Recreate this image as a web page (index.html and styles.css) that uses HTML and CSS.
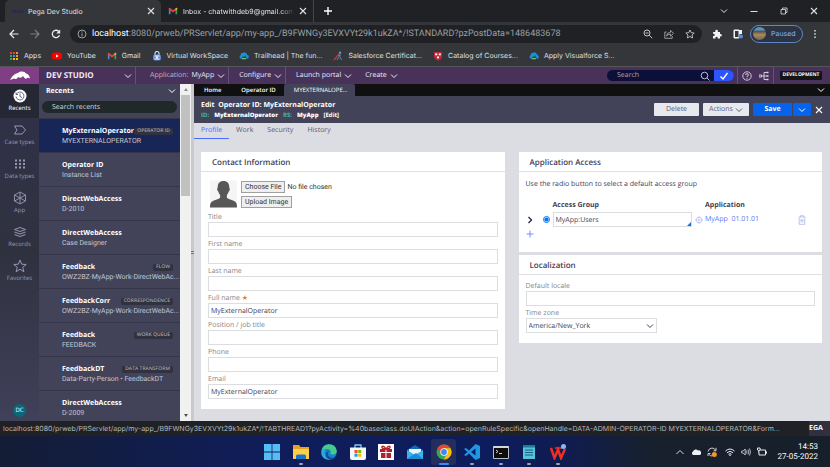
FILE: index.html
```
<!DOCTYPE html>
<html lang="en">
<head>
<meta charset="UTF-8">
<meta name="viewport" content="width=device-width, initial-scale=1.0">
<title>Pega Dev Studio</title>
<link rel="stylesheet" href="styles.css">
</head>
<body>

  <!-- shared icons -->
  <svg class="sprite" aria-hidden="true">
    <symbol id="chevron" viewBox="0 0 8 8"><path d="M1 2.500l3 3 3-3" fill="none" stroke="currentColor" stroke-width="1"/></symbol>
    <symbol id="close" viewBox="0 0 8 8"><path d="M1 1l6 6M7 1L1 7" fill="none" stroke="currentColor" stroke-width="1.1"/></symbol>
    <symbol id="gmail" viewBox="0 0 12 10"><path d="M1 9V2l2 1.5V9z" fill="#4285f4"/><path d="M9 9V3.500L11 2v7z" fill="#34a853"/><path d="M1 3V1.500L2.200 1 6 4 9.800 1l1.200.5V3L6 6.700z" fill="#ea4335"/><path d="M9 2l1.200-1L11 1.500V3L9 4.500z" fill="#fbbc04"/></symbol>
    <symbol id="salesforce" viewBox="0 0 12 12"><path d="M2.500 9.500a2.300 2.300 0 0 1-.6-4.300A3 3 0 0 1 5 2a3.300 3.300 0 0 1 4.800 2.600 2.500 2.500 0 0 1 0 4.900z" fill="#1b8fd8"/><path d="M3 9.500l2-3.500 1 1.500L7.500 5l2 4.500z" fill="#114a38"/><path d="M3.500 10h5L8 8.500H4z" fill="#79c86a"/></symbol>
  </svg>

  <header class="browser">
    <div class="tabs">
      <div class="tab tab-active">
        <span class="favicon">PEGA</span>
        <span class="tab-title">Pega Dev Studio</span>
        <svg class="icon-xs"><use href="#close"/></svg>
      </div>
      <div class="tab">
        <svg class="icon-sm"><use href="#gmail"/></svg>
        <span class="tab-title fade">Inbox - chatwithdeb9@gmail.com</span>
        <svg class="icon-xs"><use href="#close"/></svg>
      </div>
      <svg class="icon-sm new-tab" viewBox="0 0 10 10"><path d="M5 1v8M1 5h8" stroke="#fff" stroke-width="1.4"/></svg>
      <div class="window-buttons">
        <svg class="icon-xs"><use href="#chevron"/></svg>
        <svg class="icon-xs" viewBox="0 0 8 8"><path d="M.5 4.500h7" stroke="currentColor"/></svg>
        <svg class="icon-xs" viewBox="0 0 8 8"><path d="M1 2.500h4.500V7H1zM2.500 2.500V1H7v4.500H5.500" fill="none" stroke="currentColor" stroke-width=".8"/></svg>
        <svg class="icon-xs"><use href="#close"/></svg>
      </div>
    </div>

    <div class="toolbar">
      <svg class="icon-sm" viewBox="0 0 10 10"><path d="M9.500 5H1M5 1L1 5l4 4" fill="none" stroke="#e8eaed" stroke-width="1.2"/></svg>
      <svg class="icon-sm" viewBox="0 0 10 10"><path d="M.5 5H9M5 1l4 4-4 4" fill="none" stroke="#7d7f83" stroke-width="1.100"/></svg>
      <svg class="icon-sm" viewBox="0 0 10 10"><path d="M8.500 6.200A3.700 3.700 0 1 1 7.800 2.500" fill="none" stroke="#e8eaed" stroke-width="1.300"/><path d="M9.200.5v4h-4z" fill="#e8eaed"/></svg>
      <div class="address">
        <svg class="icon-sm" viewBox="0 0 10 10"><circle cx="5" cy="5" r="4" fill="none" stroke="#9aa0a6"/><path d="M5 4.300V7.500M5 2.400v1.100" stroke="#9aa0a6"/></svg>
        <span class="url"><b>localhost</b>:8080/prweb/PRServlet/app/my-app_/B9FWNGy3EVXVYt29k1ukZA*/!STANDARD?pzPostData=1486483678</span>
        <svg class="icon-sm" viewBox="0 0 10 10"><circle cx="4" cy="4" r="3" fill="none" stroke="#c4c7cb"/><path d="M6.200 6.200l3 3M2.500 4h3" stroke="#c4c7cb"/></svg>
        <svg class="icon-sm" viewBox="0 0 10 10"><path d="M2.500 3H.8v6.300h7.400V7M2.500 7q.3-3.500 4-3.700V1.300l3 3-3 2.900V5.200Q4 5 2.500 7z" fill="none" stroke="#b4b7bb" stroke-width=".8"/></svg>
        <svg class="icon-sm" viewBox="0 0 10 10"><path d="M5 1l1.200 2.700 3 .3-2.200 2 .6 3L5 7.500 2.400 9 3 6 .8 4l3-.3z" fill="none" stroke="#c4c7cb" stroke-width=".9"/></svg>
      </div>
      <svg class="icon-sm" viewBox="0 0 10 10"><path d="M1 3h2.300V2a1.300 1.300 0 0 1 2.600 0v1H8v2h.6a1.200 1.200 0 0 1 0 2.400H8V9.500H5.700V9a1.100 1.100 0 0 0-2.300 0v.5H1V7h.6a1.100 1.100 0 0 0 0-2.200H1z" fill="#f1f3f4"/></svg>
      <svg class="icon-sm side-panel" viewBox="0 0 10 10"><path d="M1 1h8v4H6V2H2v6h3v1H1z" fill="#f1f3f4"/><path d="M1 1h5v8H1z" fill="none" stroke="#f1f3f4"/><circle cx="8" cy="7.500" r="2" fill="#4d8df5"/></svg>
      <button class="profile"><span class="avatar"></span>Paused</button>
      <svg class="icon-sm" viewBox="0 0 10 10"><path d="M4.300 1h1.400v1.400H4.300zM4.300 4.300h1.400v1.400H4.300zM4.300 7.600h1.400V9H4.300z" fill="#e8eaed"/></svg>
    </div>

    <nav class="bookmarks">
      <a href="#"><svg class="icon-sm" viewBox="0 0 10 10"><path d="M1 1h2v2H1zM4 1h2v2H4z" fill="#ea4335"/><path d="M7 1h2v2H7zM7 4h2v2H7z" fill="#fb8c3c"/><path d="M1 4h2v2H1zM1 7h2v2H1z" fill="#34a853"/><path d="M4 4h2v2H4z" fill="#4285f4"/><path d="M4 7h2v2H4zM7 7h2v2H7z" fill="#fbbc04"/></svg>Apps</a>
      <a href="#"><svg class="icon-sm" viewBox="0 0 10 10"><rect y="1.500" width="10" height="7" rx="2" fill="#f00"/><path d="M4 3.500L6.700 5 4 6.500z" fill="#fff"/></svg>YouTube</a>
      <a href="#"><svg class="icon-sm"><use href="#gmail"/></svg>Gmail</a>
      <a href="#"><svg class="icon-sm" viewBox="0 0 10 10"><path d="M3 4V2.500a2 2 0 0 1 4 0V4" fill="none" stroke="#c9d8f5" stroke-width="1.200"/><rect x="1" y="3.500" width="8" height="6" rx="2" fill="#5d8ae0"/><path d="M2.500 5h5M2.500 8h5" stroke="#fff"/><circle cx="5" cy="6.500" r="1" fill="#fff"/></svg>Virtual WorkSpace</a>
      <a href="#"><svg class="icon-sm"><use href="#salesforce"/></svg>Trailhead | The fun...</a>
      <a href="#"><svg class="icon-sm" viewBox="0 0 10 10"><path d="M1 9l5-6" stroke="#c93434" stroke-width="1.400"/><path d="M4 9l2-3M6 3.500L7 6l1.500 3M5 5l3-1" fill="none" stroke="#4b8bbd"/><circle cx="7" cy="1.700" r="1.200" fill="#5f9bc8"/></svg>Salesforce Certificat...</a>
      <a href="#"><svg class="icon-sm" viewBox="0 0 10 10"><path d="M1 1h8v4Q9 8 5 9.700 1 8 1 5z" fill="#c6283b"/><path d="M2.200 2.500h2v1.700h-2zM5.800 2.500h2v1.700h-2zM4 5.500h2v1.700H4z" fill="#fff"/></svg>Catalog of Courses...</a>
      <a href="#"><svg class="icon-sm"><use href="#salesforce"/></svg>Apply Visualforce S...</a>
    </nav>
  </header>

  <header class="studio-bar">
    <div class="logo">
      <svg viewBox="0 0 20 10"><path d="M0 9Q3 3 8 2q1-2 4-1.500 3 .2 4 2 3 .5 4 5-2.500-1.500-4 .5-2-1-3-3Q11 8 8 6 7 9 4 7.500 2 8 0 9z" fill="#fff"/></svg>
    </div>
    <button class="studio-name">DEV STUDIO <svg class="icon-xs"><use href="#chevron"/></svg></button>
    <button class="menu menu-app menu-line"><span>Application:</span> MyApp <svg class="icon-xs"><use href="#chevron"/></svg></button>
    <button class="menu menu-line">Configure <svg class="icon-xs"><use href="#chevron"/></svg></button>
    <button class="menu">Launch portal <svg class="icon-xs"><use href="#chevron"/></svg></button>
    <button class="menu">Create <svg class="icon-xs"><use href="#chevron"/></svg></button>
    <div class="search">
      <input type="text" placeholder="Search" aria-label="Search">
      <svg class="icon-sm" viewBox="0 0 10 10"><circle cx="4.500" cy="4.500" r="3.300" fill="none" stroke="#b9bccb"/><path d="M7 7l2.500 2.500" stroke="#b9bccb"/></svg>
      <button class="search-go" aria-label="Go"><svg class="icon-sm" viewBox="0 0 10 10"><path d="M1.500 5.500L4 8l4.500-6" fill="none" stroke="#fff" stroke-width="1.400"/></svg></button>
    </div>
    <div class="studio-tools">
      <svg class="icon-sm" viewBox="0 0 10 10"><circle cx="5" cy="5" r="4.200" fill="none" stroke="#ddd6e4" stroke-width=".9"/><path d="M3.600 4q0-1.400 1.400-1.400T6.400 4Q6.400 5 5 5.300V6M5 6.800v1" fill="none" stroke="#ddd6e4" stroke-width=".9"/></svg>
      <svg class="icon-sm" viewBox="0 0 10 10"><path d="M0 4h2.500v2H0zM2.500 5H5M8 1.500H5v7h3M5 5h3" fill="none" stroke="#ddd6e4" stroke-width=".9"/><path d="M7.500.7H9.500v1.600h-2zM7.500 4.200H9.500v1.600h-2zM7.500 7.700H9.500v1.600h-2z" fill="#ddd6e4"/></svg>
    </div>
    <span class="env">DEVELOPMENT</span>
  </header>

  <div class="workspace">
    <nav class="rail">
      <a href="#" class="active"><svg viewBox="0 0 14 14"><circle cx="7" cy="7" r="6.500" fill="#fff"/><path d="M3.500 5A4 4 0 1 1 3 7.500M3 3.500V5.500h2M7 4.500V7.500l2 1" fill="none" stroke="#55566a" stroke-width=".9"/></svg>Recents</a>
      <a href="#"><svg viewBox="0 0 14 14"><path d="M1.500 3H9l3.500 4L9 11H1.500L4 7z" fill="none" stroke="currentColor"/></svg>Case types</a>
      <a href="#"><svg viewBox="0 0 14 14"><path d="M2 3.500h10M2 7h10M2 10.500h10" stroke="currentColor" stroke-width="2" stroke-dasharray="2"/></svg>Data types</a>
      <a href="#"><svg viewBox="0 0 14 14"><path d="M7 1l5.500 3v6L7 13l-5.500-3V4zM1.500 4L7 7l5.500-3M7 1v12M1.500 10L7 7l5.500 3" fill="none" stroke="currentColor" stroke-width=".9"/></svg>App</a>
      <a href="#"><svg viewBox="0 0 14 14"><path d="M1.500 4.500L7 2.500l5.500 2L7 6.500zM1.500 7L7 9l5.500-2M1.500 9.500L7 11.500l5.500-2" fill="none" stroke="currentColor"/></svg>Records</a>
      <a href="#"><svg viewBox="0 0 14 14"><path d="M7 1l1.700 4.200 4.500.3-3.500 2.800 1.200 4.400L7 10.300l-3.900 2.400 1.200-4.400L.8 5.500l4.500-.3z" fill="none" stroke="currentColor"/></svg>Favorites</a>
      <span class="user">DC</span>
    </nav>

    <aside class="recents">
      <div class="recents-head">
        <div class="recents-title">Recents <svg class="icon-xs"><use href="#chevron"/></svg></div>
        <input type="text" placeholder="Search recents" aria-label="Search recents">
      </div>
      <ul>
        <li class="selected"><div><b>MyExternalOperator</b><em>OPERATOR ID</em></div><p>MYEXTERNALOPERATOR</p></li>
        <li><div><b>Operator ID</b></div><p>Instance List</p></li>
        <li><div><b>DirectWebAccess</b></div><p>D-2010</p></li>
        <li><div><b>DirectWebAccess</b></div><p>Case Designer</p></li>
        <li><div><b>Feedback</b><em>FLOW</em></div><p>OWZ2BZ-MyApp-Work-DirectWebAc...</p></li>
        <li><div><b>FeedbackCorr</b><em>CORRESPONDENCE</em></div><p>OWZ2BZ-MyApp-Work-DirectWebAc...</p></li>
        <li><div><b>Feedback</b><em>WORK QUEUE</em></div><p>FEEDBACK</p></li>
        <li><div><b>FeedbackDT</b><em>DATA TRANSFORM</em></div><p>Data-Party-Person • FeedbackDT</p></li>
        <li><div><b>DirectWebAccess</b></div><p>D-2009</p></li>
      </ul>
    </aside>
    <div class="scrollbar"><i class="up"></i><i class="thumb"></i><i class="down"></i></div>
    <div class="splitter"><i></i></div>

    <main>
      <div class="doc-tabs">
        <a href="#">Home</a>
        <a href="#">Operator ID</a>
        <a href="#" class="active">MYEXTERNALOPE...</a>
        <svg class="icon-xs"><use href="#chevron"/></svg>
      </div>

      <div class="rule-head">
        <div class="rule-name">
          <h1>Edit&nbsp; Operator ID: MyExternalOperator</h1>
          <p><span>ID:</span> <b>MyExternalOperator</b> <span>RS:</span> <b>MyApp</b> <a href="#">[Edit]</a></p>
        </div>
        <button class="btn">Delete</button>
        <button class="btn btn-actions">Actions <svg class="icon-xs"><use href="#chevron"/></svg></button>
        <div class="save-group">
          <button class="save">Save</button>
          <button class="save-more" aria-label="More save options"><svg class="icon-xs"><use href="#chevron"/></svg></button>
        </div>
        <svg class="icon-xs rule-close"><use href="#close"/></svg>
      </div>

      <nav class="section-tabs">
        <a href="#" class="active">Profile</a>
        <a href="#">Work</a>
        <a href="#">Security</a>
        <a href="#">History</a>
      </nav>

      <div class="columns">
        <section class="card">
          <h2>Contact Information</h2>
          <div class="card-body">
            <div class="photo">
              <svg viewBox="0 0 28 28"><path d="M0 0h28v28H0z" fill="#f5f5f5"/><path d="M14 .5c4 0 6 2.500 6 6.500 0 1 .7 1 .5 2.500-.2 1.300-1 1.500-1.200 2.200-.5 1.800-1.300 2.800-1.800 3.300v3c1.500 1.500 5 2 8 3.500 2 1 2.500 3 2.500 6.500H0c0-3.500.5-5.500 2.500-6.500 3-1.500 6.500-2 8-3.500v-3c-.5-.5-1.300-1.500-1.800-3.300-.2-.7-1-.9-1.200-2.200C7.300 8 8 8 8 7c0-4 2-6.500 6-6.500z" fill="#575757"/></svg>
              <div>
                <input type="file" aria-label="Image file">
                <button class="upload">Upload Image</button>
              </div>
            </div>
            <label for="title">Title</label>
            <input type="text" id="title">
            <label for="first">First name</label>
            <input type="text" id="first">
            <label for="last">Last name</label>
            <input type="text" id="last">
            <label for="full">Full name <span class="required">★</span></label>
            <input type="text" id="full" value="MyExternalOperator">
            <label for="position">Position / job title</label>
            <input type="text" id="position">
            <label for="phone">Phone</label>
            <input type="text" id="phone">
            <label for="email">Email</label>
            <input type="text" id="email" value="MyExternalOperator">
          </div>
        </section>

        <div class="stack">
          <section class="card">
            <h2>Application Access</h2>
            <div class="card-body access">
              <p>Use the radio button to select a default access group</p>
              <table>
                <thead>
                  <tr><th class="col-open"></th><th class="col-radio"></th><th>Access Group</th><th class="col-target"></th><th class="col-app">Application</th><th class="col-trash"></th></tr>
                </thead>
                <tbody>
                  <tr>
                    <td><svg class="icon-xs open" viewBox="0 0 8 8"><path d="M2.500 1l3 3-3 3" fill="none" stroke="#23233c" stroke-width="1.300"/></svg></td>
                    <td><input type="radio" name="access" aria-label="Default access group" checked></td>
                    <td class="group"><input type="text" value="MyApp:Users" aria-label="Access Group"></td>
                    <td><svg class="icon-xs" viewBox="0 0 8 8"><circle cx="4" cy="4" r="2.800" fill="none" stroke="#aab4f5" stroke-width=".7"/><circle cx="4" cy="4" r="1" fill="none" stroke="#aab4f5" stroke-width=".7"/><path d="M4 0v1.500M4 6.500V8M0 4h1.500M6.500 4H8" stroke="#aab4f5" stroke-width=".7"/></svg></td>
                    <td><a href="#">MyApp&nbsp; 01.01.01</a></td>
                    <td><svg class="icon-xs trash" viewBox="0 0 8 10"><path d="M.5 2h7M2.500 2V.7h3V2M1.200 2.500v6.800h5.600V2.500M3 4v3.500M5 4v3.500M3 5.700h2" fill="none" stroke="#aab4f5" stroke-width=".8"/></svg></td>
                  </tr>
                </tbody>
              </table>
              <button class="add" aria-label="Add access group"><svg class="icon-xs" viewBox="0 0 8 8"><path d="M4 .5v7M.5 4h7" stroke="#6d82fb" stroke-width=".9"/></svg></button>
            </div>
          </section>

          <section class="card">
            <h2>Localization</h2>
            <div class="card-body locale">
              <label for="locale">Default locale</label>
              <input type="text" id="locale">
              <label for="zone">Time zone</label>
              <div class="select-wrap">
                <select id="zone"><option>America/New_York</option></select>
                <svg class="icon-xs"><use href="#chevron"/></svg>
              </div>
            </div>
          </section>
        </div>
      </div>
    </main>
  </div>

  <footer class="footer">
    <div class="status">localhost:8080/prweb/PRServlet/app/my-app_/B9FWNGy3EVXVYt29k1ukZA*/!TABTHREAD1?pyActivity=%40baseclass.doUIAction&amp;action=openRuleSpecific&amp;openHandle=DATA-ADMIN-OPERATOR-ID MYEXTERNALOPERATOR&amp;Form...</div>
    <span class="brand">EGA</span>
  </footer>

  <div class="taskbar">
    <div class="apps">
      <span><svg viewBox="0 0 16 16"><path d="M0 0h7.600v7.600H0zM8.400 0H16v7.600H8.400zM0 8.400h7.600V16H0zM8.400 8.400H16V16H8.400z" fill="#55bdf5"/></svg></span>
      <span class="running"><svg viewBox="0 0 16 16"><path d="M0 1h6l1.500 2H16v12H0z" fill="#e6a21c"/><path d="M0 5h16v10H0z" fill="#fccf4b"/><path d="M3 15v-3q0-1.500 1.500-1.500h7Q13 10.500 13 12v3z" fill="#1674c9"/></svg></span>
      <span><svg viewBox="0 0 16 16"><circle cx="8" cy="8" r="7.800" fill="#1683d0"/><path d="M.5 7Q1.500.3 8 .2q7 .3 7.800 6.800-.3 4-5 3.500-2-.5-1-2.500Q9.500 5 6 5 2 5 .5 7z" fill="#46c98a"/><path d="M.5 7Q2 5 5 5.500q-2 2-1 5 1.500 4 5.500 5Q3 16.500.5 11z" fill="#2ba8dc"/><path d="M8 7q-3 4 1.500 6.500 3 1 5.500-1-2 3-5.500 3.200Q4 14.500 4.800 9.500 6 7 8 7z" fill="#0c4f97"/></svg></span>
      <span><svg viewBox="0 0 16 16"><path d="M5 4V1h6v3" fill="none" stroke="#7cc7f7" stroke-width="1.300"/><path d="M0 3.500h16V14q0 2-2 2H2q-2 0-2-2z" fill="#f3f6fa"/><path d="M4.500 6h3v3h-3z" fill="#f25022"/><path d="M8.200 6h3v3h-3z" fill="#7fba00"/><path d="M4.500 9.700h3v3h-3z" fill="#00a4ef"/><path d="M8.200 9.700h3v3h-3z" fill="#ffb900"/></svg></span>
      <span><svg viewBox="0 0 16 16"><path d="M0 0h16v16H0z" fill="#fff"/><path d="M2 5h5.500v3H2zM8.500 5H14v3H8.500zM3 9h4.500v5H3zM8.500 9H13v5H8.500z" fill="#b5202f"/><path d="M7.500 5Q3 4.500 4 2.500 6 1.500 8 5q2-3.500 4-2.500 1 2-3.500 2.500" fill="none" stroke="#b5202f" stroke-width="1.300"/></svg></span>
      <span><svg viewBox="0 0 16 16"><path d="M0 6l8-5 8 5v9H0z" fill="#1267b4"/><path d="M2 5h12v6H2z" fill="#e9f5fd"/><path d="M0 6l8 5 8-5v9H0z" fill="#3bb1ee"/><path d="M0 15l9-6 7 6z" fill="#1d8ad6"/></svg></span>
      <span class="current"><svg viewBox="0 0 16 16"><circle cx="8" cy="8" r="7.500" fill="#34a853"/><path d="M1.500 4.200A7.500 7.500 0 0 1 14.500 4.200H8L5 9.800z" fill="#ea4335"/><path d="M14.500 4.200A7.500 7.500 0 0 1 7.700 15.500L11 9.800 8 4.200z" fill="#fbbc04"/><circle cx="8" cy="8" r="3.700" fill="#fff"/><circle cx="8" cy="8" r="2.900" fill="#4285f4"/></svg></span>
      <span class="running"><svg viewBox="0 0 16 16"><path d="M11.500 0L16 2v12l-4.500 2L5 9.500 2 12 0 11l3.500-3L0 5l2-1 3 2.500zM11.500 4.500L7 8l4.500 3.500z" fill="#2196e3" fill-rule="evenodd"/></svg></span>
      <span class="running"><svg viewBox="0 0 16 16"><path d="M.5 2.500h15v12H.5z" fill="#0c0c0c" stroke="#b9bcc2"/><path d="M.5 2h15v2H.5z" fill="#d4d6da"/><path d="M3 6l2 1.500L3 9M6 9.500h3" fill="none" stroke="#fff" stroke-width=".8"/></svg></span>
      <span class="running"><svg viewBox="0 0 16 16"><path d="M2 1h12v14H2z" fill="#54c4dc"/><path d="M2 1h12v2.500H2z" fill="#1a7c95"/><path d="M4 6h8M4 8.500h8M4 11h8" stroke="#15637b"/></svg></span>
      <span class="running"><svg viewBox="0 0 16 16"><path d="M1 4l3.500 10L8 5.500 11 14l4-9" fill="none" stroke="#ee3024" stroke-width="2.500"/><path d="M5 4h7" stroke="#ee3024" stroke-width="1.500"/><circle cx="13.500" cy="2.500" r="2.500" fill="#8fb4f7"/></svg></span>
    </div>
    <div class="tray">
      <svg class="icon-sm" viewBox="0 0 10 10"><path d="M1.500 7L5 3.500 8.500 7" fill="none" stroke="#d9dde3"/></svg>
      <svg class="icon-sm" viewBox="0 0 10 10"><path d="M2 8a2 2 0 0 1 0-3.500 3 3 0 0 1 5-1 2.300 2.300 0 0 1 1.500 4.500z" fill="#eef1f4"/></svg>
      <svg class="icon-sm" viewBox="0 0 10 10"><path d="M1 4.500Q2 1 5 1q2.500 0 3.700 2.500M9 .8v3H6.500M1 9V6.500h2.500M2 7.500Q3.500 9 5 9" fill="none" stroke="#d9dde3" stroke-width=".9"/><circle cx="7.300" cy="7.500" r="2.500" fill="#f7981d"/></svg>
      <svg class="icon-sm wifi" viewBox="0 0 10 10"><path d="M.5 4q4.500-4 9 0M2 5.700q3-2.700 6 0M3.500 7.300q1.500-1.300 3 0" fill="none" stroke="#e9ecef"/><circle cx="5" cy="8.300" r=".8" fill="#e9ecef"/></svg>
      <svg class="icon-sm" viewBox="0 0 10 10"><path d="M.7 4h1.500l2-2v6l-2-2H.7zM5.500 3.500q1 1.500 0 3M7 2.500q1.700 2.500 0 5M8.500 1.500q2 3.500 0 7" fill="none" stroke="#d9dde3" stroke-width=".8"/></svg>
      <svg class="icon-sm" viewBox="0 0 10 10"><path d="M3 3h5.500v5H2V5.500M9.500 4.500v2M.5 1v2q1.300 1.500 2.600 0V1zM1.800 3.500V6" fill="none" stroke="#e9ecef"/></svg>
    </div>
    <div class="clock">14:53<br>27-05-2022</div>
  </div>

</body>
</html>
```
FILE: styles.css
```
* {
  box-sizing: border-box;
}

body {
  margin: 0;
  height: 100vh;
  display: flex;
  flex-direction: column;
  font-family: "Open Sans", "Noto Sans", sans-serif;
  font-size: 7px;
  text-rendering: geometricPrecision;
  background-color: #dcdde3;
  color: #3f4058;
}

a {
  color: inherit;
  text-decoration: none;
}

button,
input,
select {
  font-family: inherit;
  font-size: inherit;
  color: inherit;
  margin: 0;
  text-rendering: inherit;
}

button {
  border: none;
  background: none;
  padding: 0;
  cursor: pointer;
}

h1, h2, p, ul {
  margin: 0;
  padding: 0;
}

svg {
  flex: none;
}

.sprite {
  display: none;
}

.icon-xs {
  width: 8px;
  height: 8px;
}

.icon-sm {
  width: 10px;
  height: 10px;
}

/* browser window */
.browser,
.status {
  font-family: Inter, Roboto, sans-serif;
  font-size: 7px;
}

.browser {
  background-color: #35363a;
  color: #dfe1e5;
  border-bottom: 1px solid #55565a;
}

.tabs {
  height: 22px;
  display: flex;
  align-items: center;
  background-color: #202124;
  padding-left: 5px;
}

.tab {
  width: 153px;
  height: 22px;
  display: flex;
  align-items: center;
  gap: 5px;
  padding: 0 6px 0 7px;
  border-right: 1px solid #45464a;
}

.tab-active {
  width: 156px;
  background-color: #35363a;
  border-right: none;
  border-radius: 5px 5px 0 0;
}

.favicon {
  width: 11px;
  font-size: 4px;
  font-weight: bold;
  color: #23245a;
}

.tab-title {
  flex: 1;
  overflow: hidden;
  white-space: nowrap;
}

.fade {
  mask-image: linear-gradient(to right, #000 88%, transparent);
}

.new-tab {
  margin-left: 9px;
}

.window-buttons {
  margin-left: auto;
  display: flex;
  gap: 22px;
  padding-right: 12px;
}

.toolbar {
  height: 23px;
  display: flex;
  align-items: center;
  gap: 11px;
  padding: 0 10px 0 9px;
}

.address {
  flex: 1;
  min-width: 0;
  height: 18px;
  display: flex;
  align-items: center;
  gap: 11px;
  padding: 0 7px;
  border-radius: 9px;
  background-color: #202124;
  margin-left: -2px;
  margin-right: -1px;
}

.url {
  flex: 1;
  margin-left: -6px;
  overflow: hidden;
  white-space: nowrap;
  font-family: Roboto, sans-serif;
  font-size: 9px;
  color: #9aa0a6;
}

.url b {
  font-weight: normal;
  color: #fff;
}

.side-panel {
  margin-right: -4px;
}

.profile {
  width: 53px;
  height: 18px;
  display: flex;
  align-items: center;
  gap: 5px;
  padding: 0 2px;
  border: 1px solid #5f86c4;
  border-radius: 9px;
  background-color: #2c3444;
  color: #8ab4f8;
  margin-right: -4px;
}

.avatar {
  flex: none;
  width: 13px;
  height: 13px;
  border-radius: 50%;
  background: linear-gradient(#5b93b9 25%, #4e4b3c 30%, #a68b62 60%, #77654a);
}

.bookmarks {
  height: 21px;
  display: flex;
  align-items: center;
  gap: 11px;
  padding-left: 9px;
  white-space: nowrap;
}

.bookmarks a {
  display: flex;
  align-items: center;
  gap: 5px;
}

/* purple bar */
.studio-bar {
  height: 17px;
  display: flex;
  align-items: stretch;
  background-color: #483259;
  color: #f0ecf3;
}

.studio-bar button {
  display: flex;
  align-items: center;
  white-space: nowrap;
}

.logo {
  width: 39px;
  display: flex;
  align-items: center;
  justify-content: center;
  background-color: #803e84;
}

.logo svg {
  width: 20px;
  height: 10px;
}

.studio-bar .studio-name {
  width: 97px;
  justify-content: space-between;
  padding: 0 3px 0 7px;
  font-size: 8px;
  font-weight: bold;
  border-right: 1px solid #66517a;
}

.studio-bar .menu {
  gap: 3px;
  padding: 0 3px 0 10px;
}

.studio-bar .menu-app {
  padding-left: 14px;
}

.menu-app span {
  color: #c0b4ca;
}

.studio-bar .menu-line {
  border-right: 1px solid #66517a;
}

.search {
  width: 127px;
  height: 11px;
  display: flex;
  align-items: center;
  align-self: center;
  margin: 0 3px 0 auto;
  border-radius: 6px;
  overflow: hidden;
  background-color: #0c1039;
}

.search input {
  flex: 1;
  min-width: 0;
  border: none;
  background: none;
  padding: 0 10px;
}

.search input::placeholder {
  color: #a4a6b8;
}

.search > svg {
  margin-right: 4px;
}

.search .search-go {
  width: 20px;
  height: 11px;
  justify-content: center;
  background-color: #2c55fb;
}

.studio-tools {
  width: 37px;
  display: flex;
  align-items: center;
  justify-content: space-around;
  border-left: 1px solid #66517a;
  border-right: 1px solid #66517a;
}

.env {
  width: 42px;
  align-self: center;
  margin: 0 8px 0 6px;
  line-height: 9px;
  font-size: 5px;
  font-weight: bold;
  text-align: center;
  border-radius: 1px;
  background-color: #151515;
  color: #fff;
}

/* workspace */
.workspace {
  flex: 1;
  min-height: 0;
  display: flex;
  overflow: hidden;
}

.rail {
  width: 39px;
  display: flex;
  flex-direction: column;
  background-image: linear-gradient(#30314a, #30313f 50%, #40415a);
  color: #9698b0;
  font-size: 6px;
}

.rail a {
  height: 34px;
  display: flex;
  flex-direction: column;
  align-items: center;
  justify-content: center;
  gap: 1px;
  padding-bottom: 2px;
  line-height: 8px;
}

.rail a svg {
  width: 14px;
  height: 14px;
}

.rail .active {
  background-color: #262735;
  color: #fff;
}

.user {
  width: 13px;
  height: 13px;
  margin: auto auto 4px;
  border-radius: 50%;
  background-color: #08697c;
  color: #fff;
  line-height: 13px;
  text-align: center;
}

.recents {
  width: 141px;
  background-color: #424359;
  color: #fff;
}

.recents-head {
  height: 34px;
  padding: 0 3px;
}

.recents-title {
  height: 14px;
  display: flex;
  align-items: center;
  justify-content: space-between;
  padding: 0 1px 0 4px;
  font-weight: bold;
}

.recents-head input {
  display: block;
  width: 100%;
  height: 12px;
  margin-top: 3px;
  padding: 0 10px;
  border: none;
  border-radius: 6px;
  background-color: #202829;
}

.recents-head input::placeholder {
  color: #d6d8da;
}

.recents ul {
  list-style: none;
}

.recents li {
  height: 34px;
  padding: 8px 7px 0 23px;
  border-top: 1px solid #35364a;
}

.recents li div {
  display: flex;
  align-items: center;
  justify-content: space-between;
  height: 9px;
}

.recents li p {
  white-space: nowrap;
  font-family: Roboto, "Open Sans", sans-serif;
  line-height: 11px;
  color: #c3c4d0;
}

.recents em {
  padding: 0 3px;
  border-radius: 2px;
  background-color: #313240;
  color: #a5a6b2;
  font-size: 5px;
  font-style: normal;
  font-weight: 600;
  line-height: 7px;
}

.recents .selected {
  background-color: #182557;
}

.scrollbar {
  width: 11px;
  display: flex;
  flex-direction: column;
  align-items: center;
  background-color: #f1f1f1;
}

.up,
.down {
  margin: 4px 0;
  border: 2px solid transparent;
  border-top: none;
  border-bottom: 3px solid #8a8a8a;
}

.down {
  margin-top: auto;
  border-top: 3px solid #505050;
  border-bottom: none;
}

.thumb {
  width: 9px;
  height: 101px;
  background-color: #c1c1c1;
}

.splitter {
  width: 3px;
  display: flex;
  align-items: center;
  background-color: #c9c9cc;
}

.splitter i {
  width: 3px;
  height: 3px;
  border-top: 1px solid #777;
  border-bottom: 1px solid #777;
}

main {
  flex: 1;
  min-width: 0;
}

.doc-tabs {
  height: 12px;
  display: flex;
  align-items: center;
  background-color: #101010;
  color: #fff;
  font-size: 6px;
  font-weight: 600;
  line-height: 12px;
}

.doc-tabs a {
  padding: 0 10px;
}

.doc-tabs a + a {
  padding: 0 8px 0 10px;
}

.doc-tabs svg {
  margin: 0 5px 0 auto;
}

.doc-tabs .active {
  background-color: #424359;
  border-radius: 2px 2px 0 0;
  font-weight: normal;
}

.rule-head {
  height: 27px;
  display: flex;
  align-items: center;
  gap: 4px;
  padding: 0 7px;
  background-color: #424359;
  color: #fff;
}

.rule-name {
  flex: 1;
}

.rule-name h1 {
  font-size: 7px;
  line-height: 11px;
}

.rule-name p {
  display: flex;
  gap: 5px;
  font-size: 6px;
  font-weight: bold;
  line-height: 9px;
}

.rule-name span {
  color: #45b5a8;
}

.btn {
  width: 45px;
  height: 13px;
  border-radius: 1px;
  background-color: #e8e9ee;
  color: #5b5c70;
}

.btn-actions {
  width: 46px;
  display: flex;
  align-items: center;
  justify-content: center;
  gap: 2px;
}

.save-group {
  display: flex;
  gap: 1px;
  border-radius: 1px;
  overflow: hidden;
}

.save,
.save-more {
  width: 39px;
  height: 13px;
  background-color: #0664ec;
  color: #fff;
  font-weight: bold;
}

.save-more {
  width: 18px;
}

.save-more svg {
  display: block;
  margin: 0 auto;
}

.section-tabs {
  height: 16px;
  display: flex;
  line-height: 15px;
  color: #5b5c70;
}

.section-tabs a {
  padding: 0 7px;
}

.section-tabs .active {
  color: #4b6cfa;
  border-bottom: 1px solid #4b6cfa;
}

.columns {
  display: grid;
  grid-template-columns: 1fr 1fr;
  align-items: start;
  gap: 14px;
  padding: 13px 8px 12px 7px;
}

.stack {
  display: grid;
  gap: 3px;
}

.card {
  min-width: 0;
  background-color: #fff;
}

.card h2 {
  height: 20px;
  padding-left: 11px;
  border-bottom: 1px solid #dfe0e6;
  font-size: 8px;
  font-weight: 600;
  line-height: 21px;
}

.card-body {
  padding: 8px 7px 10px;
}

.locale {
  padding-top: 6px;
}

.card-body label {
  display: block;
  height: 10px;
  line-height: 12px;
  color: #85868c;
}

.card-body input + label {
  margin-top: 2px;
}

.card-body input[type="text"],
.card-body select {
  display: block;
  width: 100%;
  height: 15px;
  padding: 1px 2px 0;
  border: 1px solid #dcdde0;
  background-color: #fff;
}

.required {
  color: #e0822c;
}

.photo {
  display: flex;
  gap: 4px;
  padding: 0 2px;
  margin-bottom: 4px;
}

.photo > svg {
  width: 27px;
  height: 28px;
}

.photo input {
  display: block;
  width: 120px;
  height: 12px;
  margin: 1px 0 3px;
  font-family: Roboto, sans-serif;
  color: #333;
}

.photo input::file-selector-button,
.upload {
  height: 12px;
  margin: 0 2px 0 0;
  padding: 0 3px;
  border: 1px solid #a0a0a0;
  border-radius: 0;
  background-color: #efefef;
  font: 7px Roboto, sans-serif;
  color: #333;
}

.upload {
  display: block;
}

.access p {
  line-height: 10px;
}

.access table {
  width: 100%;
  margin-top: 11px;
  border-collapse: collapse;
  table-layout: fixed;
}

.access th {
  padding: 0;
  height: 10px;
  line-height: 10px;
  text-align: left;
}

.access td {
  padding: 0;
  height: 17px;
  vertical-align: middle;
}

.access td > svg {
  display: block;
}

.col-open {
  width: 17px;
}

.col-radio {
  width: 10px;
}

.col-target {
  width: 13px;
}

.col-app {
  width: 93px;
}

.col-trash {
  width: 17px;
}

.access input[type="radio"] {
  display: block;
  width: 7px;
  height: 7px;
}

.access .group {
  position: relative;
}

/* blue autocomplete corner */
.group::after {
  content: "";
  position: absolute;
  right: 1px;
  bottom: 2px;
  border: 2px solid #0a6fe0;
  border-top-color: transparent;
  border-left-color: transparent;
}

.access td:nth-child(4) > svg {
  margin: 0 auto;
}

.access td a {
  color: #5b76fb;
}

.access td .trash {
  height: 10px;
}

.access .add {
  display: block;
  height: 14px;
}

.select-wrap {
  position: relative;
  width: 131px;
}

.card-body select {
  appearance: none;
}

.select-wrap svg {
  position: absolute;
  right: 3px;
  top: 4px;
}

/* link preview along the page footer */
.footer {
  height: 15px;
  display: flex;
  background-color: #30303f;
  line-height: 15px;
}

.status {
  flex: 1;
  min-width: 0;
  padding-left: 3px;
  overflow: hidden;
  white-space: nowrap;
  background-color: #202124;
  color: #b4b7bb;
}

.brand {
  width: 21px;
  color: #fff;
  font-weight: bold;
}

.taskbar {
  height: 31px;
  display: grid;
  grid-template-columns: 1fr 314px 1fr;
  align-items: center;
  background-image: linear-gradient(to right, #141d35, #101d5a 32%, #0d1c5c 60%, #101c50 68%, #17202e 78%, #171f2a);
}

.apps {
  grid-column: 2;
  display: grid;
  grid-template-columns: repeat(11, 1fr);
}

.apps span {
  height: 26px;
  display: flex;
  flex-direction: column;
  align-items: center;
  justify-content: center;
  border-radius: 3px;
  position: relative;
}

.apps svg {
  width: 16px;
  height: 16px;
}

.apps .current {
  margin: 0 2px;
  background-color: #242d5c;
}

.running::after,
.current::after {
  content: "";
  position: absolute;
  bottom: 0;
  width: 4px;
  height: 2px;
  border-radius: 1px;
  background-color: #9da3b3;
}

.current::after {
  width: 10px;
  background-color: #2f8fff;
}

.tray {
  grid-column: 3;
  grid-row: 1;
  display: flex;
  gap: 6px;
  justify-self: end;
  margin-right: 63px;
}

.wifi {
  margin-left: 2px;
}

.clock {
  grid-column: 3;
  grid-row: 1;
  justify-self: end;
  padding-right: 12px;
  color: #fff;
  font-family: Roboto, sans-serif;
  font-size: 8px;
  line-height: 10px;
  text-align: right;
}
```
